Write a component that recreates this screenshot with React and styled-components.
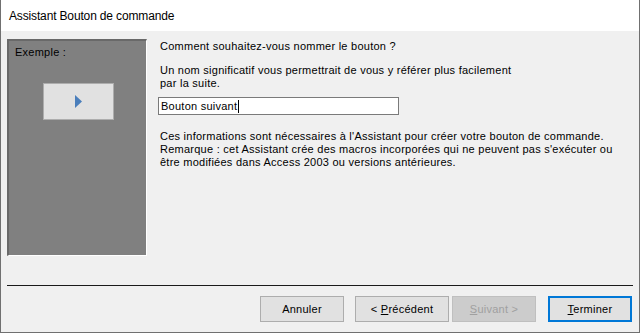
import styled, { createGlobalStyle } from 'styled-components'

const GlobalStyle = createGlobalStyle`
  html, body {
    margin: 0;
    padding: 0;
    background: #f0f0f0;
  }
  * { box-sizing: border-box; }
`

const Window = styled.div`
  width: 640px;
  height: 333px;
  display: flex;
  flex-direction: column;
  background: #f0f0f0;
  border: 1px solid #707070;
  border-top: none;
  font-family: Tahoma, "Liberation Sans", Arial, sans-serif;
  font-size: 11px;
  letter-spacing: 0.25px;
  color: #000;
  overflow: hidden;
`

const TitleBar = styled.div`
  height: 31px;
  flex: none;
  background: #fff;
  display: flex;
  align-items: center;
  padding-left: 8px;
  font-family: "Segoe UI", "Liberation Sans", sans-serif;
  font-size: 12px;
  letter-spacing: -0.15px;
  color: #000;
`

const Body = styled.div`
  flex: 1;
  display: flex;
  flex-direction: column;
  padding: 8px 6px 0 6px;
`

const Main = styled.div`
  display: flex;
  height: 217px;
  gap: 13px;
`

const Preview = styled.div`
  width: 140px;
  height: 217px;
  flex: none;
  background: #808080;
  border-top: 2px solid #696969;
  border-left: 2px solid #696969;
  border-right: 1px solid #fff;
  border-bottom: 1px solid #fff;
  padding: 5px 7px;
  display: flex;
  flex-direction: column;
`

const PreviewLabel = styled.div`
  line-height: 13px;
  margin-left: -1px;
`

const SampleButton = styled.div`
  width: 71px;
  height: 37px;
  margin: 24px 0 0 27px;
  background: #e1e1e1;
  border: 1px solid #adadad;
  display: flex;
  align-items: center;
  justify-content: center;
`

const Content = styled.div`
  flex: 1;
  display: flex;
  flex-direction: column;
  padding-top: 1px;
`

const Question = styled.p`
  margin: 0 0 11px 0;
  line-height: 13px;
`

const Hint = styled.p`
  margin: 0 0 7px 0;
  line-height: 13px;
`

const NameInput = styled.div`
  width: 241px;
  height: 18px;
  margin-left: -2px;
  background: #fff;
  border: 1px solid #7a7a7a;
  display: flex;
  align-items: center;
  padding-left: 2px;
  line-height: 13px;
`

const Caret = styled.span`
  display: inline-block;
  width: 1px;
  height: 13px;
  background: #000;
  margin-left: 1px;
`

const Note = styled.p`
  margin: 15px 0 0 0;
  line-height: 13px;
`

const Separator = styled.div`
  height: 1px;
  background: #1a1a1a;
  margin: 29px 0 0 0;
`

const ButtonRow = styled.div`
  display: flex;
  justify-content: flex-end;
  margin-top: 10px;
  padding-right: 1px;
`

const Button = styled.div`
  width: ${p => p.$w || 84}px;
  height: 26px;
  margin-left: ${p => p.$gap || 0}px;
  display: flex;
  align-items: center;
  justify-content: center;
  background: ${p => (p.$disabled ? '#cccccc' : '#e1e1e1')};
  color: ${p => (p.$disabled ? '#a0a0a0' : '#000')};
  border: ${p =>
    p.$default ? '2px solid #0078d7' : p.$disabled ? '1px solid #bfbfbf' : '1px solid #adadad'};
  font-size: 11px;
`

const Key = styled.span`
  text-decoration: underline;
`

function PlayArrow() {
  return (
    <svg width="8" height="13" viewBox="0 0 8 13">
      <path d="M0 0 L7 6.5 L0 13 Z" fill="#4a7ebb" />
    </svg>
  )
}

export default function App() {
  return (
    <>
      <GlobalStyle />
      <Window>
        <TitleBar>Assistant Bouton de commande</TitleBar>
        <Body>
          <Main>
            <Preview>
              <PreviewLabel>Exemple :</PreviewLabel>
              <SampleButton>
                <PlayArrow />
              </SampleButton>
            </Preview>
            <Content>
              <Question>Comment souhaitez-vous nommer le bouton ?</Question>
              <Hint>
                Un nom significatif vous permettrait de vous y référer plus facilement
                <br />
                par la suite.
              </Hint>
              <NameInput>
                Bouton suivant<Caret />
              </NameInput>
              <Note>
                Ces informations sont nécessaires à l'Assistant pour créer votre bouton de commande.
                <br />
                Remarque : cet Assistant crée des macros incorporées qui ne peuvent pas s'exécuter ou
                <br />
                être modifiées dans Access 2003 ou versions antérieures.
              </Note>
            </Content>
          </Main>
          <Separator />
          <ButtonRow>
            <Button $w={84}>Annuler</Button>
            <Button $w={94} $gap={11}>
              <span>
                &lt; <Key>P</Key>récédent
              </span>
            </Button>
            <Button $w={84} $gap={3} $disabled>
              <span>
                <Key>S</Key>uivant &gt;
              </span>
            </Button>
            <Button $w={84} $gap={12} $default>
              <span>
                <Key>T</Key>erminer
              </span>
            </Button>
          </ButtonRow>
        </Body>
      </Window>
    </>
  )
}
